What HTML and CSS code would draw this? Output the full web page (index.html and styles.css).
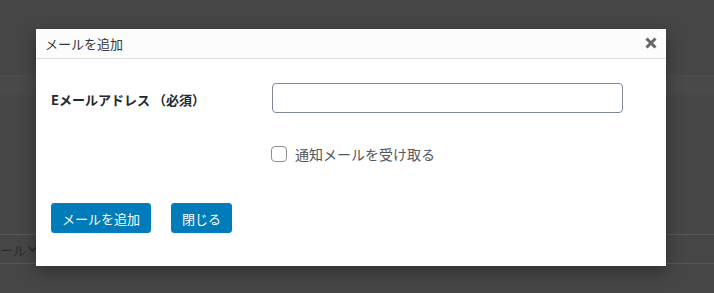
FILE: index.html
```html
<!DOCTYPE html>
<html lang="ja">
<head>
<meta charset="utf-8">
<title>メールを追加</title>
<link rel="stylesheet" href="styles.css">
</head>
<body>
<div class="page">
  <div class="bg-top"></div>
  <div class="bg-row"></div>
  <div class="bg-space"></div>
  <div class="bg-select"><span class="bg-select-text">ール</span><svg class="bg-chev" width="9" height="6" viewBox="0 0 9 6"><path d="M0.8 1 L4.5 4.8 L8.2 1" fill="none" stroke="#2c2c2c" stroke-width="1.5"/></svg></div>
</div>
<div class="dialog" role="dialog">
  <div class="titlebar">
    <span class="title">メールを追加</span>
    <button class="close" aria-label="閉じる"><svg width="12" height="12" viewBox="0 0 12 12"><path d="M1.5 1.5 L10.5 10.5 M10.5 1.5 L1.5 10.5" stroke="#666" stroke-width="3" stroke-linecap="butt"/></svg></button>
  </div>
  <div class="body">
    <div class="form">
      <label class="field-label" for="email">Eメールアドレス （必須）</label>
      <input class="field-input" id="email" type="text">
      <div class="empty"></div>
      <label class="check"><input class="checkbox" type="checkbox"><span>通知メールを受け取る</span></label>
    </div>
    <div class="buttons">
      <button class="btn">メールを追加</button>
      <button class="btn">閉じる</button>
    </div>
  </div>
</div>
</body>
</html>
```
FILE: styles.css
```css
html, body {
  margin: 0;
  padding: 0;
}
body {
  background: #464646;
  font-family: "Noto Sans CJK JP", "Noto Sans", sans-serif;
  width: 714px;
  height: 293px;
  overflow: hidden;
  position: relative;
}
.page {
  display: flex;
  flex-direction: column;
}
.bg-top {
  height: 75px;
  background: #464646;
}
.bg-row {
  height: 19px;
  background: #494949;
  border-top: 1px solid #4c4c4c;
}
.bg-space {
  height: 139px;
}
.bg-select {
  height: 28px;
  border-top: 1px solid #575757;
  border-bottom: 1px solid #575757;
  display: flex;
  align-items: center;
  gap: 2px;
  padding-left: 0;
  color: #2c2c2c;
  font-size: 13px;
}
.bg-select-text {
  line-height: 1;
}
.dialog {
  position: absolute;
  left: 36px;
  top: 29px;
  width: 630px;
  height: 237px;
  background: #fff;
  box-shadow: 0 5px 15px rgba(0, 0, 0, 0.35);
  display: flex;
  flex-direction: column;
}
.titlebar {
  height: 29px;
  background: #fcfcfc;
  border-bottom: 1px solid #dcdcde;
  display: flex;
  align-items: center;
  justify-content: space-between;
  padding: 0 8px 0 9px;
}
.title {
  font-size: 13px;
  color: #32373c;
  line-height: 1;
}
.close {
  border: 0;
  background: none;
  padding: 0;
  width: 14px;
  height: 14px;
  display: flex;
  align-items: center;
  justify-content: center;
  margin-top: -2px;
}
.body {
  padding: 24px 15px 0 15px;
}
.form {
  display: grid;
  grid-template-columns: 221px 351px;
  grid-template-rows: 30px 20px;
  row-gap: 31px;
  align-items: center;
}
.field-label {
  font-size: 13px;
  font-weight: 700;
  color: #23282d;
  line-height: 1;
  margin-top: 2px;
}
.field-input {
  box-sizing: border-box;
  width: 351px;
  height: 30px;
  margin: 0;
  border: 1px solid #7e8993;
  border-radius: 4px;
  background: #fff;
  padding: 0 8px;
  font: inherit;
}
.check {
  display: flex;
  align-items: center;
  gap: 8px;
  margin-left: -1px;
  font-size: 14px;
  color: #50575e;
  line-height: 1;
}
.checkbox {
  appearance: none;
  -webkit-appearance: none;
  box-sizing: border-box;
  width: 16px;
  height: 16px;
  margin: 0;
  border: 1px solid #8c8f94;
  border-radius: 4px;
  background: #fff;
}
.buttons {
  display: flex;
  gap: 20px;
  margin-top: 39px;
}
.btn {
  box-sizing: border-box;
  height: 30px;
  padding: 0 10px;
  background: #007cba;
  border: 1px solid #007cba;
  border-radius: 3px;
  color: #fff;
  font-family: inherit;
  font-size: 13px;
  line-height: 1;
}
```
